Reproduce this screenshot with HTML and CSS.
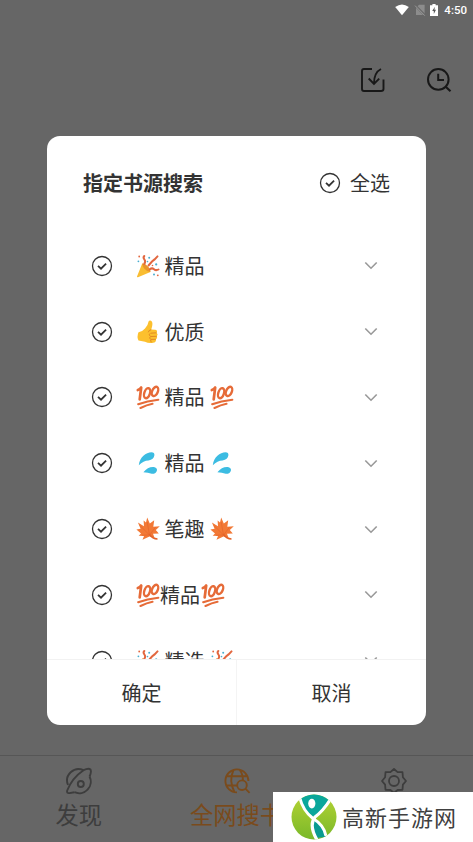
FILE: index.html
```
<!DOCTYPE html>
<html lang="zh-CN">
<head>
<meta charset="utf-8">
<title>指定书源搜索</title>
<link rel="stylesheet" href="styles.css">
</head>
<body>
<svg class="sprite" aria-hidden="true">
  <symbol id="check" viewBox="0 0 22 22"><g fill="none" stroke="currentColor"><circle cx="11" cy="11" r="9.5" stroke-width="1.3"/><path d="M7 10.9 10 13.7 15.1 8.7" stroke-width="1.8"/></g></symbol>
  <symbol id="chevron" viewBox="0 0 14 9"><path d="M1.3 1.5 7 7.2 12.7 1.5" fill="none" stroke="currentColor" stroke-width="1.6"/></symbol>
  <symbol id="party" viewBox="0 0 24 24">
    <path d="M6.2 9.5 1 22.6Q.8 23.6 2 23.3L14.4 18Q12.5 12.5 6.2 9.5Z" fill="#f9bd32"/>
    <path d="M6.2 9.5Q9 9 12 12.4T14.4 18Q10.5 17.3 8.2 14.4T6.2 9.5Z" fill="#e9952b"/>
    <g fill="none" stroke="#e2673f" stroke-width="2" stroke-linecap="round"><path d="M8.2 10Q10 7.5 8.4 5.5T8.3 2"/><path d="M12.5 11.5 16 7.5 18.6 5.4 21.5 2.4"/><path d="M13.8 15.3Q16 13.5 18 15.2T22.5 15.5"/></g>
    <g fill="#4aaed0"><circle cx="13.2" cy="3.8" r="1"/><circle cx="20.2" cy="10.4" r="1.1"/><circle cx="2.4" cy="7.3" r=".9"/><circle cx="18" cy="20.5" r="1"/><circle cx="11.5" cy="7.6" r=".8"/></g>
    <g fill="#e2673f"><circle cx="3.2" cy="2.5" r=".9"/><circle cx="21.8" cy="21.3" r=".9"/><circle cx="16.5" cy="11.5" r=".8"/></g>
  </symbol>
  <symbol id="thumb" viewBox="0 0 24 24">
    <path d="M2.5 12.2Q6.5 11.5 9 8.4 12.1 5.2 12.4 2 12.6.2 14.3.5C17.5 1 16.5 6 15.2 9.6L19.2 9.8Q21.8 10.2 20.7 12.7 22.4 14.2 20.9 16.2 21.8 18 20 19.3 20.3 22.5 17 22.8 12.5 23.5 9 21.8L2.5 20.6Q.6 16.5 2.5 12.2Z" fill="#fcc02e"/>
    <path d="M15.2 9.7Q12.5 10.2 12.3 12.3M20.5 12.8 14.7 13.2M20.8 16.3 14.8 16.5M19.8 19.3 15 19.4M14.2 13.3Q12 14.8 14.5 16.4 12.5 18.1 14.9 19.5 14 21.2 15.7 22.3" fill="none" stroke="#e28b22" stroke-width="1"/>
  </symbol>
  <symbol id="hundred" viewBox="0 0 24 24"><g fill="none" stroke="#e66b38" stroke-linecap="round" stroke-linejoin="round">
    <path d="M1.8 5Q4 4.3 5.2 2.5L3.7 14.3" stroke-width="2.7"/><ellipse cx="11.1" cy="8.2" rx="2.8" ry="5.2" transform="rotate(18 11.1 8.2)" stroke-width="2.4"/><ellipse cx="19" cy="6.4" rx="2.8" ry="4.9" transform="rotate(23 19 6.4)" stroke-width="2.4"/><path d="M2.2 19.2Q11 15.8 22.3 14.7M4.5 23Q10.8 19.9 16.5 18.8" stroke-width="2.1"/></g></symbol>
  <symbol id="sweat" viewBox="0 0 24 24"><g fill="#3cbce2"><path d="M2.8 14.2C3.7 5.6 10 1.5 15.5 1.2Q18.7 1.4 18.4 4.2 17.8 8.5 12.5 9.4 7.5 9.6 2.8 14.2Z"/><path d="M7.4 21.2Q12 15.5 17.8 16 21.2 16.7 21 19.2 20.3 22.9 15.7 22.8 12 21.4 7.4 21.2Z"/></g></symbol>
  <symbol id="maple" viewBox="0 0 24 24">
    <path d="M11.2.5 13.8 6.4 18.2 3.2 17.3 9.7 23.8 9.2 19.8 13 22.8 16.4 17 16.8 18.5 20.8 13.5 19.4 6.5 22.8 8 19 2.7 18.8 5 16.4.4 12.5 4.6 11.8 1.9 5.6 8 9.2 7.6 3.4 10 5.5Z" fill="#f27936"/>
    <path d="M13.5 18 11.2 5M13.5 18 4 8.5M13.5 18 19.5 10.2M13.5 18 6 18.2" fill="none" stroke="#e36229" stroke-width=".6"/><path d="M13.5 17.5Q16.5 21.8 21.5 22" fill="none" stroke="#e36229" stroke-width="1.4"/>
  </symbol>
</svg>

<div class="screen">
  <div class="status">
    <svg class="wifi" viewBox="0 0 14 12"><path d="M.2 3Q7-2.2 13.8 3L7 11.3Z" fill="#fff"/></svg>
    <svg class="sim" viewBox="0 0 12 12"><path d="M5 .8h5.6V11H2V4Z" fill="#8c8c8c"/><path d="M.8 1 11.2 11.6" stroke="#666" stroke-width="2.2"/><path d="M1 1.6 10.8 11.7" stroke="#9a9a9a"/></svg>
    <svg class="battery" viewBox="0 0 8 12"><path d="M2.4 0h3.2v1.2H8V12H0V1.2h2.4Z" fill="#fff"/><path d="M4.9 2.8 2.2 7h1.6v3L6 5.8H4.4Z" fill="#555"/></svg>
    <span>4:50</span>
  </div>
  <div class="tools">
    <svg viewBox="0 0 26 26"><g fill="none" stroke="currentColor" stroke-width="1.9"><path d="M12 2H4Q2 2 2 4V22Q2 24 4 24H21Q23.5 24 23.5 22V12.5"/><path d="M21 2Q14 5.5 14 16.5M8.7 11.5 14 17 19.2 11.7"/></g></svg>
    <svg viewBox="0 0 26 26"><g fill="none" stroke="currentColor" stroke-width="2"><circle cx="12.3" cy="12.4" r="10.3"/><path d="M12.2 6.8V13.1H18"/><path d="M19.7 19.8 24.5 24.3" stroke-width="2.2"/></g></svg>
  </div>

  <div class="dialog">
    <div class="head"><h1>指定书源搜索</h1><svg class="check"><use href="#check"/></svg><span>全选</span></div>
    <div class="list">
      <div class="row"><svg class="check"><use href="#check"/></svg><div class="name"><svg><use href="#party"/></svg><span>精品</span></div><svg class="chevron"><use href="#chevron"/></svg></div>
      <div class="row"><svg class="check"><use href="#check"/></svg><div class="name"><svg><use href="#thumb"/></svg><span>优质</span></div><svg class="chevron"><use href="#chevron"/></svg></div>
      <div class="row"><svg class="check"><use href="#check"/></svg><div class="name"><svg><use href="#hundred"/></svg><span>精品</span><svg><use href="#hundred"/></svg></div><svg class="chevron"><use href="#chevron"/></svg></div>
      <div class="row"><svg class="check"><use href="#check"/></svg><div class="name"><svg><use href="#sweat"/></svg><span>精品</span><svg><use href="#sweat"/></svg></div><svg class="chevron"><use href="#chevron"/></svg></div>
      <div class="row"><svg class="check"><use href="#check"/></svg><div class="name"><svg><use href="#maple"/></svg><span>笔趣</span><svg><use href="#maple"/></svg></div><svg class="chevron"><use href="#chevron"/></svg></div>
      <div class="row"><svg class="check"><use href="#check"/></svg><div class="name tight"><svg><use href="#hundred"/></svg><span>精品</span><svg><use href="#hundred"/></svg></div><svg class="chevron"><use href="#chevron"/></svg></div>
      <div class="row"><svg class="check"><use href="#check"/></svg><div class="name"><svg><use href="#party"/></svg><span>精选</span><svg><use href="#party"/></svg></div><svg class="chevron"><use href="#chevron"/></svg></div>
    </div>
    <div class="actions"><div>确定</div><div>取消</div></div>
  </div>

  <div class="tabs">
    <div class="tab">
      <svg viewBox="0 0 28 28"><g fill="none" stroke="currentColor" stroke-width="1.9"><path d="M3 18A11.5 11.5 0 0 1 18.5 3.2M24.5 9.5A11.5 11.5 0 0 1 9.5 25.2"/><path d="M18.5 3.2Q23.5.8 25.4 2.4 26.8 4.5 24.5 9.5M18.5 3.2Q7 11 2.2 23.5 1.5 26.5 4.5 26.1L9.5 25.2"/><circle cx="15.8" cy="17" r="3"/></g></svg>
      <span>发现</span>
    </div>
    <div class="tab active">
      <svg viewBox="0 0 28 28"><g fill="none" stroke="currentColor" stroke-width="1.9"><path d="M14 25.4A11.5 11.5 0 1 1 25.4 14M3.5 9.3H24.5M3.5 18.5H14M10.5 3Q5.5 13.5 11.5 25.2M16.8 3Q19.8 7 20 13.4"/><circle cx="19" cy="18.2" r="4.8"/><path d="M22.4 21.6 26.6 25.8"/></g></svg>
      <span>全网搜书</span>
    </div>
    <div class="tab">
      <svg viewBox="0 0 28 28"><g fill="none" stroke="currentColor" stroke-width="1.8" stroke-linejoin="round"><path d="M14 2 17.6 5.1 22.5 5.2 22.9 10.2 26 14 22.9 17.7 22.5 22.8 17.6 23 14 26 10.4 23 5.5 22.8 5.1 17.7 2 14 5.1 10.2 5.5 5.2 10.4 5.1Z"/><circle cx="14" cy="14" r="5"/></g></svg>
    </div>
  </div>

  <div class="brand">
    <svg viewBox="0 0 46 46">
      <defs><clipPath id="disc"><circle cx="23" cy="23" r="22.5"/></clipPath><linearGradient id="leaf" x1="0" y1="0" x2="0" y2="1"><stop offset="0" stop-color="#b5d334"/><stop offset="1" stop-color="#79b829"/></linearGradient></defs>
      <g clip-path="url(#disc)"><rect width="46" height="46" fill="url(#leaf)"/><path d="M8 0Q11 14 22 23 33 15 38 5L34 0Z" fill="#0aa79b"/><path d="M22 26Q34 31 34.5 43L24 44Q19 34 22 26Z" fill="#0a9b91"/>
      <path d="M8.5 3Q12 17 22 24.5 33 31 35 42" fill="none" stroke="#fff" stroke-width="3"/><path d="M39 6Q32 17 24 23 17.5 31 26 46" fill="none" stroke="#fff" stroke-width="3.2"/><ellipse cx="20.8" cy="9.6" rx="3.6" ry="4.8" fill="#fff"/></g>
    </svg>
    <span>高新手游网</span>
  </div>
</div>
</body>
</html>
```
FILE: styles.css
```
* { box-sizing: border-box; }
body {
  margin: 0;
  font-family: "Noto Sans CJK SC", "Noto Sans", sans-serif;
  color: #333;
}
svg { display: block; flex: none; }
.sprite { position: absolute; width: 0; height: 0; }
.screen {
  position: relative;
  width: 473px;
  height: 842px;
  overflow: hidden;
  background: #666;
  display: flex;
  flex-direction: column;
}
.status {
  height: 20px;
  padding-right: 6px;
  display: flex;
  justify-content: flex-end;
  align-items: center;
  color: #fff;
  font: 500 11.5px/20px Roboto, sans-serif;
}
.wifi { width: 14px; height: 12px; margin-right: 5px; }
.sim { width: 12px; height: 12px; margin-right: 4px; }
.battery { width: 8px; height: 12px; margin-right: 6px; }
.tools {
  height: 116px;
  padding: 46.5px 21.5px 0 0;
  display: flex;
  justify-content: flex-end;
  gap: 40px;
  color: #181818;
}
.tools svg { width: 26px; height: 26px; }
.dialog {
  width: 379px;
  height: 589px;
  margin-left: 47px;
  background: #fff;
  border-radius: 13px;
  overflow: hidden;
  display: flex;
  flex-direction: column;
}
.head {
  height: 97px;
  padding: 0 36px 3px;
  display: flex;
  align-items: center;
  font-size: 20px;
  line-height: 30px;
}
.head h1 { margin: 0 auto 0 0; font-size: 20px; font-weight: 700; }
.head .check { margin-right: 9px; }
.check { width: 22px; height: 22px; }
.list { height: 426px; overflow: hidden; }
.row {
  height: 65.8px;
  padding: 0 48.5px 0 44px;
  display: flex;
  align-items: center;
}
.name {
  flex: 1;
  margin-left: 22.5px;
  display: flex;
  align-items: center;
  gap: 5px;
  font-size: 20px;
  line-height: 30px;
}
.name svg { width: 24px; height: 24px; }
.name.tight { gap: .5px; }
.chevron { width: 14px; height: 9px; color: #999; }
.actions {
  flex: 1;
  border-top: 1px solid #f2f2f2;
  display: flex;
  font-size: 20px;
}
.actions div {
  flex: 1;
  display: flex;
  align-items: center;
  justify-content: center;
}
.actions div + div { border-left: 1px solid #f4f4f4; }
.tabs {
  height: 87px;
  margin-top: 30px;
  border-top: 1px solid #565656;
  display: flex;
  color: #3d3d3d;
}
.tab {
  flex: 1;
  padding-top: 11px;
  display: flex;
  flex-direction: column;
  align-items: center;
  font-size: 23.3px;
  line-height: 38px;
}
.tab svg { width: 28px; height: 28px; }
.tab.active { color: #7a4b1c; }
.brand {
  position: absolute;
  right: 0;
  bottom: 0;
  width: 200px;
  height: 50px;
  padding-left: 18px;
  display: flex;
  align-items: center;
  background: #fff;
  color: #404040;
  font-size: 22px;
  line-height: 30px;
  letter-spacing: 1px;
  white-space: nowrap;
}
.brand svg { width: 46px; height: 46px; margin-right: 5px; }
.brand span { padding-bottom: 2px; }
```
